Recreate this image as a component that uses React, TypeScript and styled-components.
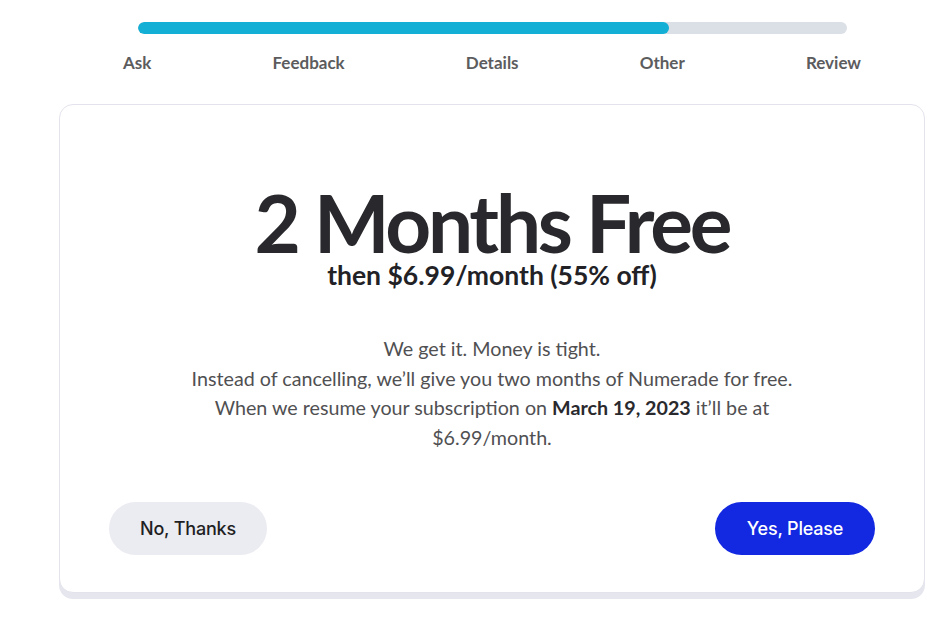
import React from "react";
import styled, { createGlobalStyle } from "styled-components";

const Global = createGlobalStyle`
  html, body { margin: 0; padding: 0; background: #ffffff; }
  body { font-family: Lato, "Open Sans", sans-serif; }
  * { box-sizing: border-box; }
`;

const Page = styled.div`
  width: 950px;
  height: 632px;
  overflow: hidden;
  padding: 22px 0 0 59px;
`;

const Column = styled.div`
  width: 866px;
  display: flex;
  flex-direction: column;
  align-items: center;
`;

const Track = styled.div`
  width: 709px;
  height: 12px;
  border-radius: 6px;
  background: #dbdfe6;
  overflow: hidden;
`;

const Fill = styled.div`
  height: 100%;
  border-radius: 6px;
  background: #13afd4;
`;

const Steps = styled.div`
  width: 738px;
  margin-top: 19px;
  display: flex;
  justify-content: space-between;
`;

const Step = styled.span`
  font-family: Lato, sans-serif;
  font-weight: 700;
  font-size: 17px;
  line-height: 20px;
  color: #5c5c5e;
`;

const Card = styled.div`
  width: 866px;
  margin-top: 31px;
  border: 1.5px solid #e3e3ec;
  border-radius: 14px;
  box-shadow: 0 6px 0 #e6e6ef;
  background: #fff;
  padding: 81px 49px 37px;
  display: flex;
  flex-direction: column;
  align-items: center;
`;

const Title = styled.h1`
  margin: 0;
  font-family: Lato, sans-serif;
  font-weight: 700;
  font-size: 80px;
  line-height: 72px;
  color: #29292d;
  letter-spacing: -3.2px;
`;

const Subtitle = styled.h2`
  margin: 2px 0 0;
  font-family: Lato, sans-serif;
  font-weight: 700;
  font-size: 26.5px;
  line-height: 30px;
  color: #222226;
`;

const Body = styled.p`
  margin: 44px 0 0;
  max-width: 660px;
  text-align: center;
  font-family: Lato, sans-serif;
  font-size: 19.7px;
  line-height: 29.7px;
  color: #505052;

  strong {
    font-weight: 700;
    color: #2a2a2e;
  }
`;

const Actions = styled.div`
  align-self: stretch;
  margin-top: 49px;
  display: flex;
  justify-content: space-between;
`;

const Button = styled.button<{ $primary?: boolean }>`
  height: 53px;
  width: ${(p) => (p.$primary ? "160px" : "158px")};
  padding: 0;
  border: none;
  border-radius: 27px;
  font-family: Inter, Roboto, sans-serif;
  font-size: 18px;
  font-weight: 500;
  letter-spacing: -0.2px;
  cursor: pointer;
  background: ${(p) => (p.$primary ? "#1228e1" : "#ebebf2")};
  color: ${(p) => (p.$primary ? "#ffffff" : "#1f1f24")};
`;

const steps = ["Ask", "Feedback", "Details", "Other", "Review"];

export default function App() {
  const progress = 75;
  return (
    <>
      <Global />
      <Page>
        <Column>
          <Track>
            <Fill style={{ width: `${progress}%` }} />
          </Track>
          <Steps>
            {steps.map((s) => (
              <Step key={s}>{s}</Step>
            ))}
          </Steps>
          <Card>
            <Title>2 Months Free</Title>
            <Subtitle>then $6.99/month (55% off)</Subtitle>
            <Body>
              We get it. Money is tight.
              <br />
              Instead of cancelling, we’ll give you two months of Numerade for free.
              <br />
              When we resume your subscription on <strong>March 19, 2023</strong> it’ll be at
              <br />
              $6.99/month.
            </Body>
            <Actions>
              <Button>No, Thanks</Button>
              <Button $primary>Yes, Please</Button>
            </Actions>
          </Card>
        </Column>
      </Page>
    </>
  );
}
